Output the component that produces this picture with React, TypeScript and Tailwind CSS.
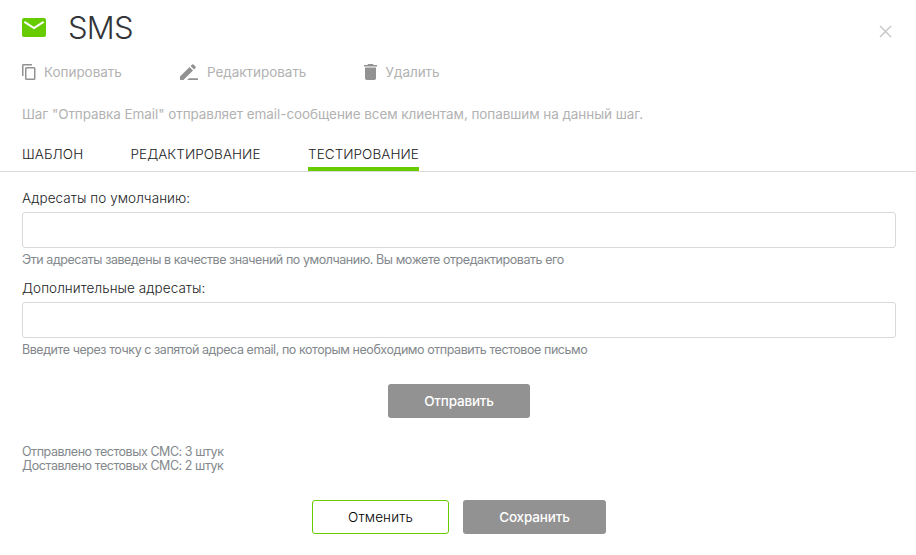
import React from "react";

const tools = [
  {
    label: "Копировать",
    box: "w-[158px]",
    gap: "gap-[8px]",
    icon: (
      <svg className="h-4 w-[14px] shrink-0" viewBox="0 0 14 16" fill="none" stroke="#929292">
        <path d="M0.75 12V1.4a0.7 0.7 0 0 1 0.7 -0.7H10" strokeWidth="1.5" />
        <rect x="3.75" y="3.75" width="9" height="11.5" rx="0.8" strokeWidth="1.5" />
      </svg>
    ),
  },
  {
    label: "Редактировать",
    box: "w-[184px]",
    gap: "gap-[9px]",
    icon: (
      <svg className="h-4 w-[18px] shrink-0" viewBox="0 0 18 16" fill="#929292">
        <path d="M0 16V12.6L9.6 3L13 6.4L3.4 16ZM10.6 2L12.1 0.5a1 1 0 0 1 1.4 0L15.5 2.5a1 1 0 0 1 0 1.4L14 5.4ZM9 14.2H18V16H7.2Z" />
      </svg>
    ),
  },
  {
    label: "Удалить",
    box: "",
    gap: "gap-[8.5px]",
    icon: (
      <svg className="h-4 w-[13px] shrink-0" viewBox="0 0 13 16" fill="#929292">
        <path d="M0 1H3.4L4.2 0H8.8L9.6 1H13V2.6H0ZM1 4H12V14.2A1.8 1.8 0 0 1 10.2 16H2.8A1.8 1.8 0 0 1 1 14.2Z" />
        <path d="M1 2.6H12V4H1Z" fill="#c9c9c9" />
      </svg>
    ),
  },
];

function Field({ label, hint }: { label: string; hint: string }) {
  return (
    <div className="flex h-[90px] flex-col">
      <label className="h-6 whitespace-nowrap text-[13.5px] font-light leading-5 tracking-[0.06px] text-[#1c1d1f]">{label}</label>
      <input className="h-9 w-full shrink-0 rounded-[3px] border border-[#d9d9d9] bg-white px-3 outline-none" />
      <p className="mt-[3px] whitespace-nowrap text-[12.5px] leading-[18px] tracking-[-0.44px] text-[#83888c]">{hint}</p>
    </div>
  );
}

export default function App() {
  return (
    <main className="h-[555px] w-[916px] overflow-hidden bg-white font-['Inter',sans-serif]">
      <header className="flex h-14 items-center pl-[22px] pr-6">
        <svg className="h-5 w-6 shrink-0" viewBox="0 0 24 20">
          <rect width="24" height="19" rx="2" fill="#66cc00" />
          <path d="M2.4 3.8L12 10L21.6 3.8" fill="none" stroke="white" strokeWidth="2" />
        </svg>
        <h1 className="-mt-[2px] ml-[22px] text-[31px] font-light leading-none tracking-[-0.8px] text-[#333538]">SMS</h1>
        <button className="ml-auto mt-[6px]" aria-label="Закрыть">
          <svg className="h-[13px] w-[13px]" viewBox="0 0 13 13" fill="none" stroke="#c4c4c4" strokeWidth="1.4">
            <path d="M1 1L12 12M12 1L1 12" />
          </svg>
        </button>
      </header>
      <nav className="flex h-8 items-center pl-[22px]">
        {tools.map((t) => (
          <div key={t.label} className={`flex items-center ${t.box} ${t.gap}`}>
            {t.icon}
            <span className="whitespace-nowrap text-[13.5px] leading-5 tracking-[-0.04px] text-[#b2b2b2]">{t.label}</span>
          </div>
        ))}
      </nav>
      <p className="mt-4 h-10 whitespace-nowrap pl-[22px] text-[13.5px] leading-5 tracking-[-0.07px] text-[#b2b2b2]">
        Шаг "Отправка Email" отправляет email-сообщение всем клиентам, попавшим на данный шаг.
      </p>
      <div className="flex h-7 border-b border-[#d9d9d9] pl-[22px] text-[13.5px] font-light leading-5 tracking-[0.06px] text-[#222]">
        <span className="w-[108.5px]">ШАБЛОН</span>
        <span className="w-[177.5px]">РЕДАКТИРОВАНИЕ</span>
        <span className="w-[111px] whitespace-nowrap border-b-4 border-[#66cc00]">ТЕСТИРОВАНИЕ</span>
      </div>
      <section className="flex flex-col pl-[22px] pr-5 pt-4">
        <Field
          label="Адресаты по умолчанию:"
          hint="Эти адресаты заведены в качестве значений по умолчанию. Вы можете отредактировать его"
        />
        <Field
          label="Дополнительные адресаты:"
          hint="Введите через точку с запятой адреса email, по которым необходимо отправить тестовое письмо"
        />
        <button className="mt-4 h-[34px] w-[142px] self-center rounded-[3px] bg-[#929292] text-[13.5px] font-medium tracking-[-0.2px] text-white">Отправить</button>
        <div className="mt-[27px] text-[12.5px] leading-[14px] tracking-[-0.45px] text-[#83888c]">
          <p>Отправлено тестовых СМС: 3 штук</p>
          <p>Доставлено тестовых СМС: 2 штук</p>
        </div>
        <div className="mt-[27px] flex justify-center gap-[14px] text-[13.5px]">
          <button className="h-[34px] w-[137px] rounded-[3px] border border-[#66cc00] font-light tracking-[0.15px] text-black">Отменить</button>
          <button className="h-[34px] w-[143px] rounded-[3px] bg-[#929292] font-medium tracking-[-0.15px] text-white">Сохранить</button>
        </div>
      </section>
    </main>
  );
}
